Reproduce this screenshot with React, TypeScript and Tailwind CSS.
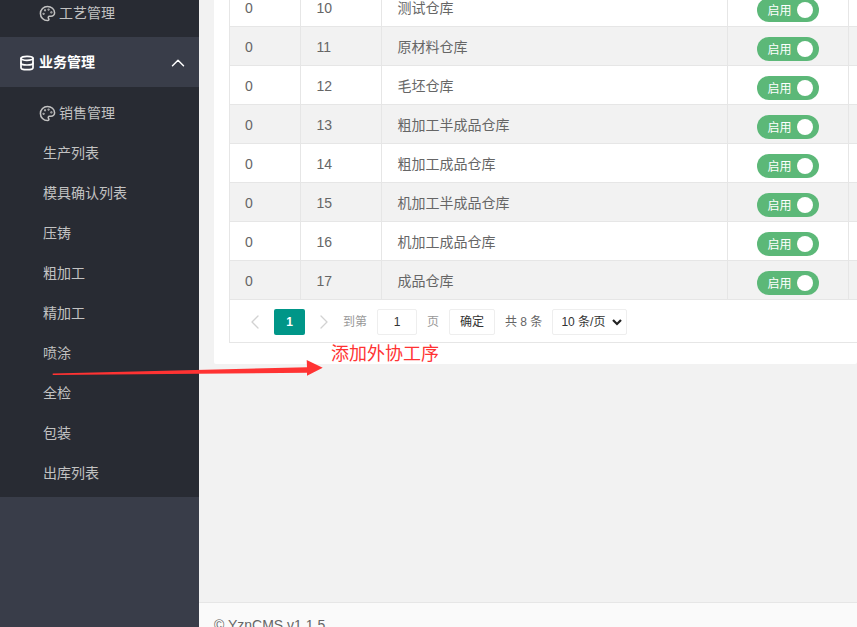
import { ChevronLeft, ChevronRight, ChevronUp, Database, Palette } from "lucide-react";

const subItems = ["生产列表", "模具确认列表", "压铸", "粗加工", "精加工", "喷涂", "全检", "包装", "出库列表"];

const rows = [
  { id: 10, name: "测试仓库" },
  { id: 11, name: "原材料仓库" },
  { id: 12, name: "毛坯仓库" },
  { id: 13, name: "粗加工半成品仓库" },
  { id: 14, name: "粗加工成品仓库" },
  { id: 15, name: "机加工半成品仓库" },
  { id: 16, name: "机加工成品仓库" },
  { id: 17, name: "成品仓库" },
];

function Sidebar() {
  return (
    <aside className="w-[199px] shrink-0 bg-[#393d49] text-[14px] text-[#c2c2c2]">
      <div className="h-[37px] bg-[#282b33] overflow-hidden">
        <div className="flex h-[26px] items-center pl-[39px]">
          <Palette size={17} strokeWidth={2.2} className="mr-[3px]" />
          工艺管理
        </div>
      </div>
      <div className="flex h-[50px] items-center justify-between pl-[19px] pr-[10px] pt-[1px] font-bold text-white">
        <span className="flex items-center">
          <Database size={16} strokeWidth={2.6} className="mr-[4px]" />
          业务管理
        </span>
        <ChevronUp size={22} strokeWidth={1.6} />
      </div>
      <div className="bg-[#282b33] py-[6px] pb-[4px]">
        <div className="flex h-[40px] items-center pl-[39px]">
          <Palette size={17} strokeWidth={2.2} className="mr-[3px]" />
          销售管理
        </div>
        {subItems.map((item) => (
          <div key={item} className="flex h-[40px] items-center pl-[43px]">
            {item}
          </div>
        ))}
      </div>
    </aside>
  );
}

function Switch() {
  return (
    <div className="mx-auto flex h-[24px] w-[62px] items-center justify-between rounded-full bg-[#5cb878] pl-[11px] pr-[6px] text-[12px] text-white">
      <span className="pt-[2px]">启用</span>
      <span className="h-[16px] w-[16px] rounded-full bg-white" />
    </div>
  );
}

function Pager() {
  return (
    <div className="flex h-[42px] items-center pl-[13px] pt-[2px] text-[12px] text-[#999]">
      <ChevronLeft size={24} strokeWidth={1.3} className="mr-[7px] text-[#d2d2d2]" />
      <span className="flex h-[26px] w-[31px] items-center justify-center rounded-[2px] bg-[#009688] font-bold text-white">1</span>
      <ChevronRight size={24} strokeWidth={1.3} className="ml-[7px] text-[#d2d2d2]" />
      <span className="ml-[7px]">到第</span>
      <span className="ml-[10px] flex h-[26px] w-[40px] items-center justify-center rounded-[2px] border border-[#eee] text-[#333]">1</span>
      <span className="ml-[10px]">页</span>
      <span className="ml-[10px] flex h-[26px] w-[46px] items-center justify-center rounded-[2px] border border-[#eee] text-[#333]">确定</span>
      <span className="ml-[10px] text-[#666]">共 8 条</span>
      <span className="ml-[10px] flex h-[26px] w-[75px] items-center justify-between rounded-[2px] border border-[#eee] pl-[8px] pr-[3px] text-[#333]">
        10 条/页
        <svg width="12" height="12" viewBox="0 0 12 12" fill="none" stroke="#222" strokeWidth="2.2">
          <path d="M2 4l4 4 4-4" />
        </svg>
      </span>
    </div>
  );
}

function Annotation() {
  return (
    <>
      <div className="absolute left-[331px] top-[342px] text-[18px] leading-[24px] text-[#f33]">添加外协工序</div>
      <svg className="absolute left-[50px] top-[355px]" width="276" height="24" viewBox="0 0 276 24">
        <path d="M2.700 18.500L257 12.300L256.700 5L272.700 12.700L257 20.700L257 17.800L2.700 20Z" fill="#f33" />
      </svg>
    </>
  );
}

export default function App() {
  return (
    <div
      className="relative flex h-screen overflow-hidden bg-[#f2f2f2]"
      style={{ fontFamily: '"Liberation Sans", "Noto Sans CJK SC", sans-serif' }}
    >
      <Sidebar />
      <main className="flex min-w-0 flex-1 flex-col">
        <div className="flex-1 overflow-hidden pl-[15px]">
          <div className="-mt-[13px] h-[377px] rounded-b-[2px] bg-white pl-[15px]">
            <div className="w-[700px] border-x border-b border-[#e6e6e6] text-[14px] text-[#666]">
              <table className="w-full table-fixed border-collapse">
                <colgroup>
                  <col className="w-[70px]" />
                  <col className="w-[81px]" />
                  <col className="w-[346px]" />
                  <col className="w-[121px]" />
                  <col />
                </colgroup>
                <tbody>
                  {rows.map((row, i) => (
                    <tr key={row.id} className={i % 2 === 1 ? "h-[39px] bg-[#f2f2f2]" : "h-[39px]"}>
                      <td className="border-r border-b border-[#e6e6e6] pl-[15px] pt-[4px]">0</td>
                      <td className="border-r border-b border-[#e6e6e6] pl-[16px] pt-[4px]">{row.id}</td>
                      <td className="border-r border-b border-[#e6e6e6] pl-[16px] pt-[4px]">{row.name}</td>
                      <td className="border-r border-b border-[#e6e6e6] pt-[7px]">
                        <Switch />
                      </td>
                      <td className="border-b border-[#e6e6e6]" />
                    </tr>
                  ))}
                </tbody>
              </table>
              <Pager />
            </div>
          </div>
        </div>
        <footer className="h-[25px] shrink-0 overflow-hidden border-t border-[#e6e6e6] bg-[#fafafa] pl-[15px] text-[14px] leading-[44px] text-[#666]">
          © YznCMS v1.1.5
        </footer>
      </main>
      <Annotation />
    </div>
  );
}
